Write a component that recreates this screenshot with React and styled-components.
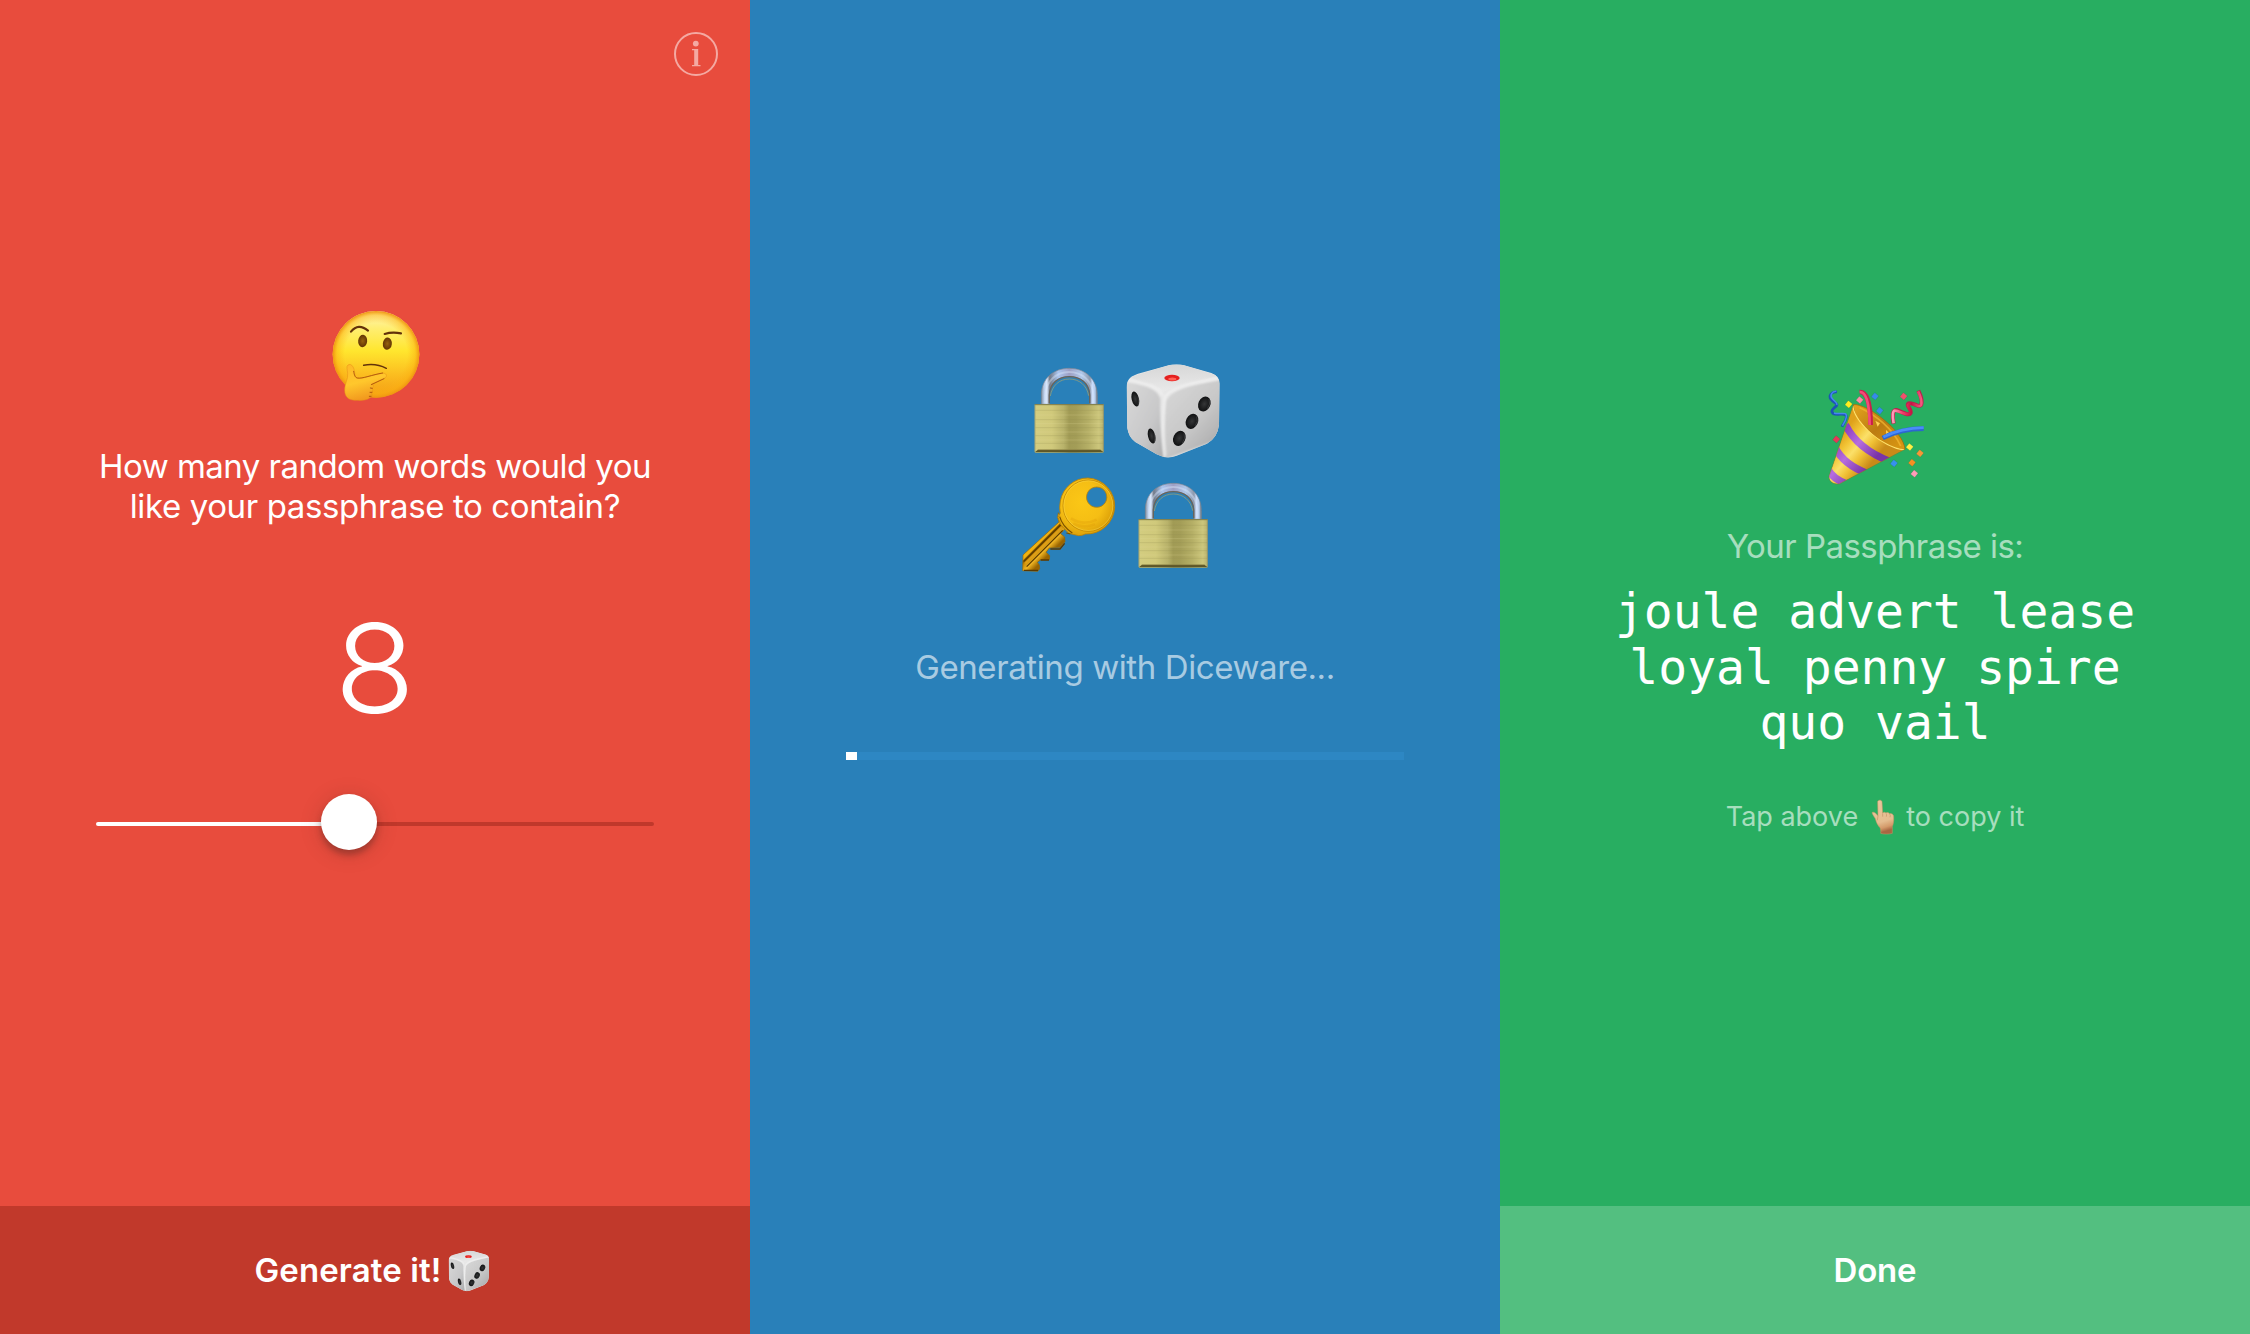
import React from "react";
import styled, { createGlobalStyle } from "styled-components";

const GlobalStyle = createGlobalStyle`
  * { box-sizing: border-box; }
  body { margin: 0; font-family: Inter, "Liberation Sans", sans-serif; color: #fff; }
`;

const Screens = styled.main`
  display: grid;
  grid-template-columns: repeat(3, 1fr);
  width: 2250px;
  height: 1334px;
`;

const Screen = styled.section`
  display: flex;
  flex-direction: column;
  align-items: center;
  background: ${(p) => p.$color};
`;

const TopBar = styled.header`
  align-self: stretch;
  display: flex;
  justify-content: flex-end;
  height: 76px;
  padding: 32px 32px 0 0;
`;

const InfoButton = styled.button`
  width: 44px;
  height: 44px;
  padding: 0;
  border: 0;
  background: none;
  color: rgba(255, 255, 255, 0.52);
`;

const Art = styled.div`
  width: 130px;
  height: 130px;
  margin-top: ${(p) => p.$top}px;
`;

const ArtGrid = styled.div`
  display: grid;
  grid-template-columns: 104px 104px;
  grid-auto-rows: 115px;
  margin: 279px 10px 0 0;
`;

const Graphic = styled.svg`
  display: block;
  width: 100%;
  height: 100%;
`;

const Message = styled.p`
  margin: ${(p) => p.$top}px 0 0;
  font-size: 33px;
  line-height: 40px;
  text-align: center;
  white-space: nowrap;
  letter-spacing: ${(p) => p.$tracking || 0}px;
  color: ${(p) => (p.$muted ? "rgba(255,255,255,0.6)" : "#fff")};
`;

const Line = styled.span`
  display: block;
  letter-spacing: ${(p) => p.$tracking}px;
`;

const Count = styled.output`
  margin-top: 67px;
  font-size: 124px;
  font-weight: 300;
  line-height: 150px;
  transform: scaleX(1.07);
`;

const Slider = styled.div`
  position: relative;
  display: flex;
  flex-direction: column;
  justify-content: center;
  width: 558px;
  height: 56px;
  margin-top: 51px;
  padding-top: 4px;
`;

const Track = styled.div`
  height: 4px;
  border-radius: 2px;
  background: linear-gradient(to right, #fff 45%, #c0382b 45%);
`;

const Thumb = styled.div`
  position: absolute;
  top: 0;
  left: 225px;
  width: 56px;
  height: 56px;
  border-radius: 50%;
  background: #fff;
  box-shadow: 0 5px 6px rgba(70, 35, 30, 0.36), 0 3px 22px rgba(70, 35, 30, 0.2);
`;

const Progress = styled.div`
  width: 558px;
  height: 8px;
  margin-top: 65px;
  background: #2d87c3;
`;

const ProgressFill = styled.div`
  width: 11px;
  height: 100%;
  background: #fff;
`;

const Passphrase = styled.p`
  width: 558px;
  margin: 18px 0 0;
  font: 48px/55.7px "DejaVu Sans Mono", monospace;
  text-align: center;
`;

const Hint = styled.p`
  display: flex;
  align-items: center;
  margin: 46px 0 0;
  font-size: 27px;
  line-height: 40px;
  color: rgba(255, 255, 255, 0.6);
`;

const HintIcon = styled.span`
  width: 28px;
  height: 38px;
  margin: 0 9px 0 11px;
`;

const Action = styled.button`
  align-self: stretch;
  display: flex;
  align-items: center;
  justify-content: center;
  height: 128px;
  margin-top: auto;
  padding: 0;
  border: 0;
  background: ${(p) => p.$color};
  color: #fff;
  font: 600 33px/40px Inter, "Liberation Sans", sans-serif;
  letter-spacing: ${(p) => p.$tracking}px;
`;

const ActionIcon = styled.span`
  width: 42px;
  height: 42px;
  margin: 2px 5px 0 7px;
`;

const InfoIcon = () => (
  <Graphic viewBox="0 0 44 44" fill="none">
    <circle cx="22" cy="22" r="21" stroke="currentColor" strokeWidth="2" />
    <circle cx="21.8" cy="11.6" r="2.9" fill="currentColor" />
    <path d="M18 17h6.200V33h2.300v1.200h-8.500V33h2.200V18.200H18z" fill="currentColor" />
  </Graphic>
);

const Thinking = () => (
  <Graphic viewBox="0 0 390 390">
    <defs>
      <linearGradient id="face" x1="0" y1="0" x2="0" y2="1">
        <stop offset="0" stopColor="#fff6bd" />
        <stop offset=".2" stopColor="#ffee72" />
        <stop offset=".46" stopColor="#ffe62e" />
        <stop offset=".75" stopColor="#fbbb1f" />
        <stop offset="1" stopColor="#f39a13" />
      </linearGradient>
      <radialGradient id="faceEdge" cx=".5" cy=".5" r=".5">
        <stop offset=".72" stopColor="#fdb515" stopOpacity="0" />
        <stop offset=".9" stopColor="#fbb011" stopOpacity=".5" />
        <stop offset="1" stopColor="#ee9411" />
      </radialGradient>
      <linearGradient id="thinkHand" x1="0" y1="0" x2=".3" y2="1">
        <stop offset="0" stopColor="#ffb726" />
        <stop offset=".55" stopColor="#ffc72c" />
        <stop offset="1" stopColor="#f29a1e" />
      </linearGradient>
      <radialGradient id="eye">
        <stop offset="0" stopColor="#96630f" />
        <stop offset="1" stopColor="#633504" />
      </radialGradient>
    </defs>
    <circle cx="198" cy="193" r="130" fill="url(#face)" />
    <circle cx="198" cy="193" r="130" fill="url(#faceEdge)" />
    <ellipse cx="158" cy="153" rx="13.500" ry="18.500" fill="url(#eye)" transform="rotate(6 158 153)" />
    <ellipse cx="232" cy="161" rx="13.500" ry="18.500" fill="url(#eye)" transform="rotate(6 232 161)" />
    <g fill="none" stroke="#63320a" strokeLinecap="round">
      <path d="M123 125Q145 98 174 122" strokeWidth="6.500" />
      <path d="M224 132Q246 125 273 130" strokeWidth="6.500" />
      <path d="M161 226Q198 219 229 235" strokeWidth="4.500" />
    </g>
    <path
      d="M114 225c9-5 15 3 18 13 3 12 2 20 6 25 8 5 22 1 35-3l42-10c14-3 20 9 7 16l-37 16c7 4 6 11 0 13 5 4 4 11-1 13 4 6 2 13-4 15-8 7-22 9-40 8-21 0-36-7-36-31 0-20 11-33 9-49-1-13-5-22 1-26z"
      fill="url(#thinkHand)"
      stroke="#e58f17"
      strokeWidth="1.500"
    />
    <path d="M131 244c2 12 4 18 11 20 15 3 44-10 76-15M222 266l-38 18M181 294l6 1M180 307l6 0M178 319l5 0" fill="none" stroke="#a64a0b" strokeWidth="2.500" strokeLinecap="round" />
  </Graphic>
);

const Lock = () => (
  <Graphic viewBox="18 15 312 345">
    <defs>
      <linearGradient id="shackle" x1="94" x2="262" gradientUnits="userSpaceOnUse">
        <stop offset="0" stopColor="#85909e" />
        <stop offset=".05" stopColor="#b9cdea" />
        <stop offset=".1" stopColor="#dce9fd" />
        <stop offset=".15" stopColor="#727987" />
        <stop offset=".3" stopColor="#abc5ee" />
        <stop offset=".5" stopColor="#9d9fc4" />
        <stop offset=".72" stopColor="#b0c8ea" />
        <stop offset=".87" stopColor="#8f99ac" />
        <stop offset=".91" stopColor="#c9dcfb" />
        <stop offset=".96" stopColor="#b5cdec" />
        <stop offset="1" stopColor="#676d75" />
      </linearGradient>
      <linearGradient id="brass">
        <stop offset="0" stopColor="#d3cd80" />
        <stop offset=".25" stopColor="#d0c97b" />
        <stop offset=".42" stopColor="#b8b26a" />
        <stop offset=".5" stopColor="#a19b55" />
        <stop offset=".6" stopColor="#a39d57" />
        <stop offset=".78" stopColor="#b5af66" />
        <stop offset=".93" stopColor="#ccc67b" />
        <stop offset="1" stopColor="#b7b06b" />
      </linearGradient>
    </defs>
    <path
      d="M94 163v-28c0-49 36-80 84-80s84 33 84 82v26h-22v-28c-2-37-28-55-62-55s-58 18-60 55v28z"
      fill="url(#shackle)"
      stroke="#7f8793"
      strokeWidth="2"
    />
    <path d="M106 160v-25c2-41 32-69 71-69s71 27 73 69v25" fill="none" stroke="#dfeaff" strokeOpacity=".4" strokeWidth="6" />
    <path d="M118 160v-25c2-36 27-55 60-55s59 19 61 55v25" fill="none" stroke="#67645c" strokeWidth="4" />
    <path d="M121 138c5-31 27-51 57-51s53 20 58 50" fill="none" stroke="#aca56b" strokeWidth="2" />
    <rect x="74" y="162" width="207" height="146" rx="3" fill="url(#brass)" />
    <path d="M76 181h204M76 209h204M76 233h204M76 257h204M76 280h204" stroke="#938f55" strokeOpacity=".45" strokeWidth="1.600" />
    <path d="M76 195h204M76 221h204M76 246h204M76 270h204" stroke="#e5dda0" strokeOpacity=".28" strokeWidth="2.400" />
    <path d="M74 164h207" stroke="#7b7849" strokeWidth="3" />
    <path d="M74 307l9-7h189l9 7z" fill="#5e5728" />
    <path d="M83 299h189" stroke="#8a8146" strokeWidth="2" />
    <path d="M75 164v141M280 164v141" stroke="#8d8a60" strokeOpacity=".8" strokeWidth="2" />
  </Graphic>
);

const Dice = ({ viewBox }) => (
  <Graphic viewBox={viewBox}>
    <defs>
      <linearGradient id="diceTop" x1="0" y1="0" x2=".1" y2="1">
        <stop offset="0" stopColor="#d6d6d6" />
        <stop offset="1" stopColor="#e9e9e9" />
      </linearGradient>
      <linearGradient id="diceLeft" x1="0" y1="0" x2="1" y2="1">
        <stop offset="0" stopColor="#dadada" />
        <stop offset=".6" stopColor="#c8c8c9" />
        <stop offset="1" stopColor="#a8a9aa" />
      </linearGradient>
      <linearGradient id="diceRight" x1="0" y1="0" x2=".85" y2="1">
        <stop offset="0" stopColor="#d9d9d9" />
        <stop offset=".55" stopColor="#c8c8c8" />
        <stop offset="1" stopColor="#a5a5a6" />
      </linearGradient>
      <filter id="diceSoft" x="-20%" y="-20%" width="140%" height="140%">
        <feGaussianBlur stdDeviation="3" />
      </filter>
      <clipPath id="diceShape">
        <path d="M350 112c0-26 14-34 34-41l92-25q24-6 46 0l82 23q24 8 25 32l-2 123q-4 38-36 57l-91 36q-30 12-60-4l-64-37q-20-14-24-42z" />
      </clipPath>
      <radialGradient id="pip">
        <stop offset="0" stopColor="#353637" />
        <stop offset="1" stopColor="#101112" />
      </radialGradient>
    </defs>
    <g clipPath="url(#diceShape)">
      <path d="M340 30h300v300H340z" fill="#e6e6e6" />
      <path d="M360 82l120-38 40 0 105 34c-55 14-120 27-165 47-30-20-68-28-100-43z" fill="url(#diceTop)" />
      <path d="M345 95c40 8 99 15 106 53q-3 85 12 190L340 260z" fill="url(#diceLeft)" filter="url(#diceSoft)" />
      <path d="M635 88c-66 16-148 22-168 68q-9 78-2 172l180-66z" fill="url(#diceRight)" filter="url(#diceSoft)" />
      <path d="M353 90c38 8 96 16 104 47M628 85c-60 12-145 22-164 58-5 60-4 120 2 175" fill="none" stroke="#f6f6f6" strokeOpacity=".5" strokeWidth="9" filter="url(#diceSoft)" />
    </g>
    <ellipse cx="486" cy="84" rx="23" ry="9.500" fill="#e5201f" />
    <ellipse cx="487" cy="87" rx="12" ry="4.500" fill="#ff6256" />
    <g fill="url(#pip)">
      <ellipse cx="376" cy="147" rx="11" ry="23" transform="rotate(-13 376 147)" />
      <ellipse cx="425" cy="258" rx="11" ry="23" transform="rotate(-13 425 258)" />
      <ellipse cx="583" cy="162" rx="18" ry="23.500" transform="rotate(25 583 162)" />
      <ellipse cx="546" cy="214" rx="18" ry="23.500" transform="rotate(25 546 214)" />
      <ellipse cx="508" cy="265" rx="18" ry="23.500" transform="rotate(25 508 265)" />
    </g>
    <g fill="none" stroke="#77797a" strokeOpacity=".5" strokeWidth="2">
      <path d="M597 147q6 16-5 29M560 199q6 16-5 29M522 250q6 16-5 29M384 139q4 15 0 28M433 250q4 15 0 28" />
    </g>
  </Graphic>
);

const Key = () => (
  <Graphic viewBox="18 360 312 345">
    <defs>
      <radialGradient id="gold" cx=".42" cy=".42" r=".62">
        <stop offset="0" stopColor="#fbc716" />
        <stop offset=".6" stopColor="#f5be14" />
        <stop offset="1" stopColor="#d89b06" />
      </radialGradient>
      <linearGradient id="goldBlade" x1="70" y1="560" x2="120" y2="610" gradientUnits="userSpaceOnUse">
        <stop offset="0" stopColor="#f9c215" />
        <stop offset=".38" stopColor="#efb010" />
        <stop offset=".43" stopColor="#6e4700" />
        <stop offset=".52" stopColor="#c88905" />
        <stop offset=".75" stopColor="#edb322" />
        <stop offset="1" stopColor="#9b6500" />
      </linearGradient>
    </defs>
    <path
      d="M145 488l-2 14 4 14-108 99-1 47 45 2 6-8-1-11-6-8 9-7 27-1 1-12-11-10 10-13 32-2 15-17-1-14-12-10 13-15z"
      fill="url(#goldBlade)"
      stroke="#996500"
      strokeWidth="2"
    />
    <path d="M152 525L42 634M158 541L50 650" stroke="#593900" strokeWidth="3.500" fill="none" />
    <path d="M155 532L46 640" stroke="#dda01a" strokeWidth="5" fill="none" />
    <path d="M42 661h42M92 630h25M121 597h29l14-17" stroke="#5c3a00" strokeWidth="4" fill="none" />
    <path
      fillRule="evenodd"
      d="M234 384a84 84 0 1 1-8 168q-9 5-20 5l-30-7-24-26-8-22 7-13q-4-14 0-36a84 84 0 0 1 83-69zM260 411a30.500 30.500 0 1 0 .1 0z"
      fill="url(#gold)"
      stroke="#b98106"
      strokeWidth="2.500"
    />
    <ellipse cx="235" cy="467" rx="76" ry="77" fill="none" stroke="#ba8103" strokeWidth="2.200" />
    <ellipse cx="235" cy="467" rx="73.500" ry="74.500" fill="none" stroke="#ffe056" strokeOpacity=".8" strokeWidth="1.600" />
    <path d="M183 505q36 24 77 4M190 520q30 16 65 3" fill="none" stroke="#e09d08" strokeOpacity=".35" strokeWidth="8" />
    <path d="M149 500q8 29 38 49M169 549l12 3" fill="none" stroke="#7b5000" strokeWidth="3.500" />
  </Graphic>
);

const Popper = () => (
  <Graphic viewBox="0 0 390 390">
    <defs>
      <linearGradient id="cone" x1="80" y1="210" x2="175" y2="290" gradientUnits="userSpaceOnUse">
        <stop offset="0" stopColor="#dfa11b" />
        <stop offset=".25" stopColor="#f2c435" />
        <stop offset=".48" stopColor="#fbe069" />
        <stop offset=".7" stopColor="#f0c035" />
        <stop offset="1" stopColor="#c98a18" />
      </linearGradient>
      <linearGradient id="coneBand" x1="80" y1="210" x2="175" y2="290" gradientUnits="userSpaceOnUse">
        <stop offset="0" stopColor="#8e3fc0" />
        <stop offset=".45" stopColor="#b66ddf" />
        <stop offset="1" stopColor="#7a33a8" />
      </linearGradient>
      <linearGradient id="mouth" x1="0" y1="0" x2="1" y2="1">
        <stop offset="0" stopColor="#e5a51e" />
        <stop offset=".5" stopColor="#bc7c12" />
        <stop offset="1" stopColor="#dc9a12" />
      </linearGradient>
      <linearGradient id="pinkRibbon">
        <stop offset="0" stopColor="#ff9dba" />
        <stop offset=".35" stopColor="#f43d6b" />
        <stop offset=".65" stopColor="#c91442" />
        <stop offset="1" stopColor="#f4577f" />
      </linearGradient>
      <clipPath id="coneShape">
        <path d="M130 104c-1 38 70 122 155 134L89 341c-17 4-33-6-32-22z" />
      </clipPath>
    </defs>
    <path d="M130 104c40-5 151 79 155 134-58 2-154-70-155-134z" fill="url(#mouth)" stroke="#9d6007" strokeWidth="2" />
    <path d="M149 113c44 19 100 63 123 115" fill="none" stroke="#f1b632" strokeWidth="5" strokeOpacity=".75" />
    <path d="M196 152l14 8-7 10zM228 180l9 8-9 7z" fill="#ffcf53" />
    <path d="M149 66c19-2 33 27 33 99" fill="none" stroke="#c9204c" strokeWidth="14" />
    <path d="M149 66c17-1 29 25 30 99" fill="none" stroke="#f54b78" strokeWidth="8" />
    <path d="M218 204q54-28 123-28" fill="none" stroke="#2c66cf" strokeWidth="14" />
    <path d="M220 201q54-27 121-28" fill="none" stroke="#4a8bf9" strokeWidth="8" />
    <g clipPath="url(#coneShape)">
      <path d="M130 104c-1 38 70 122 155 134L89 341c-17 4-33-6-32-22z" fill="url(#cone)" />
      <g fill="none" stroke="url(#coneBand)" strokeWidth="22">
        <path d="M106 164q36 73 135 111" />
        <path d="M76 234q25 49 95 76" />
        <path d="M52 296q18 32 57 45" />
      </g>
      <path d="M131 107c1 42 82 122 153 132" fill="none" stroke="#ffe06a" strokeWidth="7" />
    </g>
    <path d="M130 104L57 319c-1 16 15 26 32 22l196-103" fill="none" stroke="#a16b10" strokeOpacity=".6" strokeWidth="2" />
    <g fill="none" strokeLinejoin="round">
      <path d="M81 66c-16-3-26 12-18 22 7 10 22 13 17 19-11 9-20 16-10 24 13 6 40-5 39 10-1 12-9 20-13 29" stroke="#1b53b6" strokeWidth="8" />
      <path d="M79 64c-13-1-20 12-13 21 7 9 18 14 14 20M72 129c17 6 40-7 37 12-1 10-7 18-12 26" stroke="#4685ef" strokeWidth="4.500" />
      <path d="M251 161c-5-23-3-43 8-41 14 3 38 21 43 9 3-13-16-23-6-29 12-5 31 15 37 5 5-10-1-29-8-43" stroke="#b9224c" strokeWidth="12" />
      <path d="M251 160c-4-22-4-39 5-38 15 1 41 19 46 5 1-12-15-20-5-25 13-4 31 13 36 3 4-11-2-27-9-41" stroke="url(#pinkRibbon)" strokeWidth="8" />
    </g>
    {[
      [116, 103, "#ffee1e"],
      [149, 90, "#ff8ca6"],
      [195, 79, "#368be8"],
      [209, 122, "#368be8"],
      [281, 79, "#f2506c"],
      [79, 208, "#e83758"],
      [299, 231, "#fff044"],
      [330, 250, "#f79736"],
      [306, 278, "#f79022"],
      [252, 280, "#3790ef"],
      [313, 311, "#ff9cb8"],
    ].map(([x, y, color]) => (
      <rect key={`${x}-${y}`} x={x - 8} y={y - 8} width="16" height="16" rx="1" fill={color} stroke="#195a35" strokeOpacity=".3" strokeWidth="1.500" transform={`rotate(40 ${x} ${y})`} />
    ))}
  </Graphic>
);

const Finger = () => (
  <Graphic viewBox="504 54 84 114">
    <defs>
      <linearGradient id="skin" x1="0" y1="0" x2=".2" y2="1">
        <stop offset="0" stopColor="#e9c79d" />
        <stop offset=".7" stopColor="#e5bd90" />
        <stop offset=".88" stopColor="#d49a6a" />
        <stop offset="1" stopColor="#a86742" />
      </linearGradient>
    </defs>
    <path
      d="M530 65c1-6 12-6 13 0l2 34c3-3 8-3 10 0 3-2 8-2 10 2 5-2 13 1 13 9 1 13-1 22-4 30v20c-8 3-28 3-35 0 1-7 0-13-2-17-7-7-11-16-14-27-3-6-9-13-10-18 5-5 14 4 18 9z"
      fill="url(#skin)"
      stroke="#c99263"
      strokeWidth="1.500"
    />
    <path d="M545 100v10M555 100q3 4 1 10M566 102q3 4 1 10M531 107l-2 14" fill="none" stroke="#bd8258" strokeWidth="1.500" />
  </Graphic>
);

export default function App() {
  return (
    <>
      <GlobalStyle />
      <Screens>
        <Screen $color="#e84c3d">
          <TopBar>
            <InfoButton aria-label="Info">
              <InfoIcon />
            </InfoButton>
          </TopBar>
          <Art $top={214}>
            <Thinking />
          </Art>
          <Message $top={26}>
            <Line $tracking={-0.527}>How many random words would you</Line>
            <Line $tracking={-0.387}>like your passphrase to contain?</Line>
          </Message>
          <Count>8</Count>
          <Slider>
            <Track />
            <Thumb />
          </Slider>
          <Action $color="#c1392b" $tracking={0.1}>
            Generate it!
            <ActionIcon>
              <Dice viewBox="345 38 290 290" />
            </ActionIcon>
          </Action>
        </Screen>

        <Screen $color="#2980b9">
          <TopBar />
          <ArtGrid>
            <Lock />
            <Dice viewBox="330 15 312 345" />
            <Key />
            <Lock />
          </ArtGrid>
          <Message $top={62} $tracking={-0.4} $muted>
            Generating with Diceware...
          </Message>
          <Progress>
            <ProgressFill />
          </Progress>
        </Screen>

        <Screen $color="#28ae61">
          <TopBar />
          <Art $top={294}>
            <Popper />
          </Art>
          <Message $top={26} $tracking={-0.54} $muted>
            Your Passphrase is:
          </Message>
          <Passphrase>joule advert lease loyal penny spire quo vail</Passphrase>
          <Hint>
            Tap above
            <HintIcon>
              <Finger />
            </HintIcon>
            to copy it
          </Hint>
          <Action $color="#53bf80" $tracking={-0.2}>
            Done
          </Action>
        </Screen>
      </Screens>
    </>
  );
}
